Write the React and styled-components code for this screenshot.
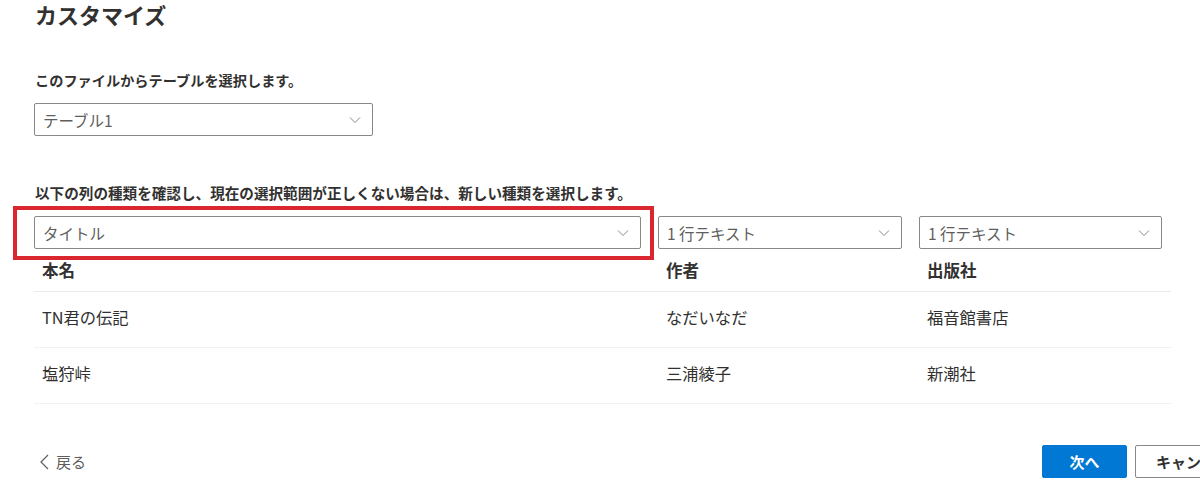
import React from "react";
import styled, { createGlobalStyle } from "styled-components";

const GlobalStyle = createGlobalStyle`
  html, body {
    margin: 0;
    padding: 0;
    background: #ffffff;
    overflow: hidden;
  }
  body {
    font-family: "Noto Sans CJK JP", "Noto Sans", sans-serif;
    color: #323130;
  }
`;

const Page = styled.div`
  width: 1218px;
  padding-left: 34px;
  display: flex;
  flex-direction: column;
`;

const Title = styled.h1`
  margin: 0;
  font-size: 22px;
  line-height: 29px;
  font-weight: 700;
  color: #323130;
  padding-left: 1px;
`;

const Label = styled.div`
  font-size: ${(p) => p.size || 14.2}px;
  font-weight: 700;
  line-height: 20px;
  color: #323130;
  margin-top: ${(p) => p.top}px;
  padding-left: 1px;
  white-space: nowrap;
`;

const SelectBox = styled.div`
  box-sizing: border-box;
  width: ${(p) => (p.width ? `${p.width}px` : "100%")};
  height: 33px;
  border: 1px solid #8a8886;
  border-radius: 2px;
  display: flex;
  align-items: center;
  justify-content: space-between;
  padding: 0 10px 0 8px;
  margin-top: ${(p) => p.top || 0}px;
  font-size: 15.5px;
  color: #605e5c;
  background: #fff;
  svg {
    flex-shrink: 0;
  }
`;

const Chevron = () => (
  <svg width="14" height="14" viewBox="0 0 14 14" fill="none">
    <path d="M2 4.5 L7 9.5 L12 4.5" stroke="#8a8886" strokeWidth="1" />
  </svg>
);

const Select = ({ value, width, top }) => (
  <SelectBox width={width} top={top}>
    <span>{value}</span>
    <Chevron />
  </SelectBox>
);

const Table = styled.div`
  width: 1136px;
  margin-top: ${(p) => p.top}px;
  display: grid;
  grid-template-columns: 607px 244px 243px;
  column-gap: 17px;
`;

const Cell = styled.div`
  position: relative;
  display: flex;
  align-items: center;
  padding-left: 8px;
  margin-right: ${(p) => (p.last ? "-9px" : "-17px")};
  padding-right: ${(p) => (p.last ? "9px" : "17px")};
`;

const HeadCell = styled(Cell)`
  height: 42px;
  font-size: 16.5px;
  font-weight: 700;
  color: #323130;
  border-bottom: 1px solid #edebe9;
`;

const DataCell = styled(Cell)`
  box-sizing: border-box;
  height: 56px;
  padding-bottom: 6px;
  font-size: 16.3px;
  color: #323130;
  border-bottom: 1px solid #f3f2f1;
`;

const SelectCell = styled.div`
  position: relative;
`;

const Highlight = styled.div`
  position: absolute;
  top: -10px;
  left: -21px;
  right: -13px;
  bottom: -11px;
  border: 4px solid #d9262f;
  pointer-events: none;
`;

const Footer = styled.div`
  margin-top: 41px;
  display: flex;
  align-items: center;
  justify-content: space-between;
`;

const BackLink = styled.div`
  display: flex;
  align-items: center;
  gap: 6px;
  padding-left: 4px;
  font-size: 15px;
  color: #605e5c;
`;

const Buttons = styled.div`
  display: flex;
  gap: 8px;
`;

const Button = styled.button`
  box-sizing: border-box;
  height: 33px;
  min-width: ${(p) => p.w}px;
  border-radius: 2px;
  font-family: inherit;
  font-size: 15px;
  font-weight: 700;
  padding: 0 20px;
  border: 1px solid ${(p) => (p.primary ? "#0078d4" : "#8a8886")};
  background: ${(p) => (p.primary ? "#0078d4" : "#ffffff")};
  color: ${(p) => (p.primary ? "#ffffff" : "#323130")};
`;

const columns = [
  { type: "タイトル", name: "本名" },
  { type: "1 行テキスト", name: "作者" },
  { type: "1 行テキスト", name: "出版社" },
];

const rows = [
  ["TN君の伝記", "なだいなだ", "福音館書店"],
  ["塩狩峠", "三浦綾子", "新潮社"],
];

export default function App() {
  return (
    <>
      <GlobalStyle />
      <Page>
        <Title>カスタマイズ</Title>
        <Label top={41}>このファイルからテーブルを選択します。</Label>
        <Select value="テーブル1" width={339} top={13} />
        <Label top={47} size={14.6}>
          以下の列の種類を確認し、現在の選択範囲が正しくない場合は、新しい種類を選択します。
        </Label>
        <Table top={13}>
          {columns.map((c, i) => (
            <SelectCell key={c.name}>
              <Select value={c.type} />
              {i === 0 && <Highlight />}
            </SelectCell>
          ))}
          {columns.map((c, i) => (
            <HeadCell key={c.name} last={i === 2}>
              {c.name}
            </HeadCell>
          ))}
          {rows.map((r) =>
            r.map((v, i) => (
              <DataCell key={v} last={i === 2}>
                {v}
              </DataCell>
            ))
          )}
        </Table>
        <Footer>
          <BackLink>
            <svg width="12" height="18" viewBox="0 0 12 18" fill="none">
              <path d="M10 2 L3 9 L10 16" stroke="#605e5c" strokeWidth="1.2" />
            </svg>
            <span>戻る</span>
          </BackLink>
          <Buttons>
            <Button primary w={85}>次へ</Button>
            <Button w={110}>キャンセル</Button>
          </Buttons>
        </Footer>
      </Page>
    </>
  );
}
